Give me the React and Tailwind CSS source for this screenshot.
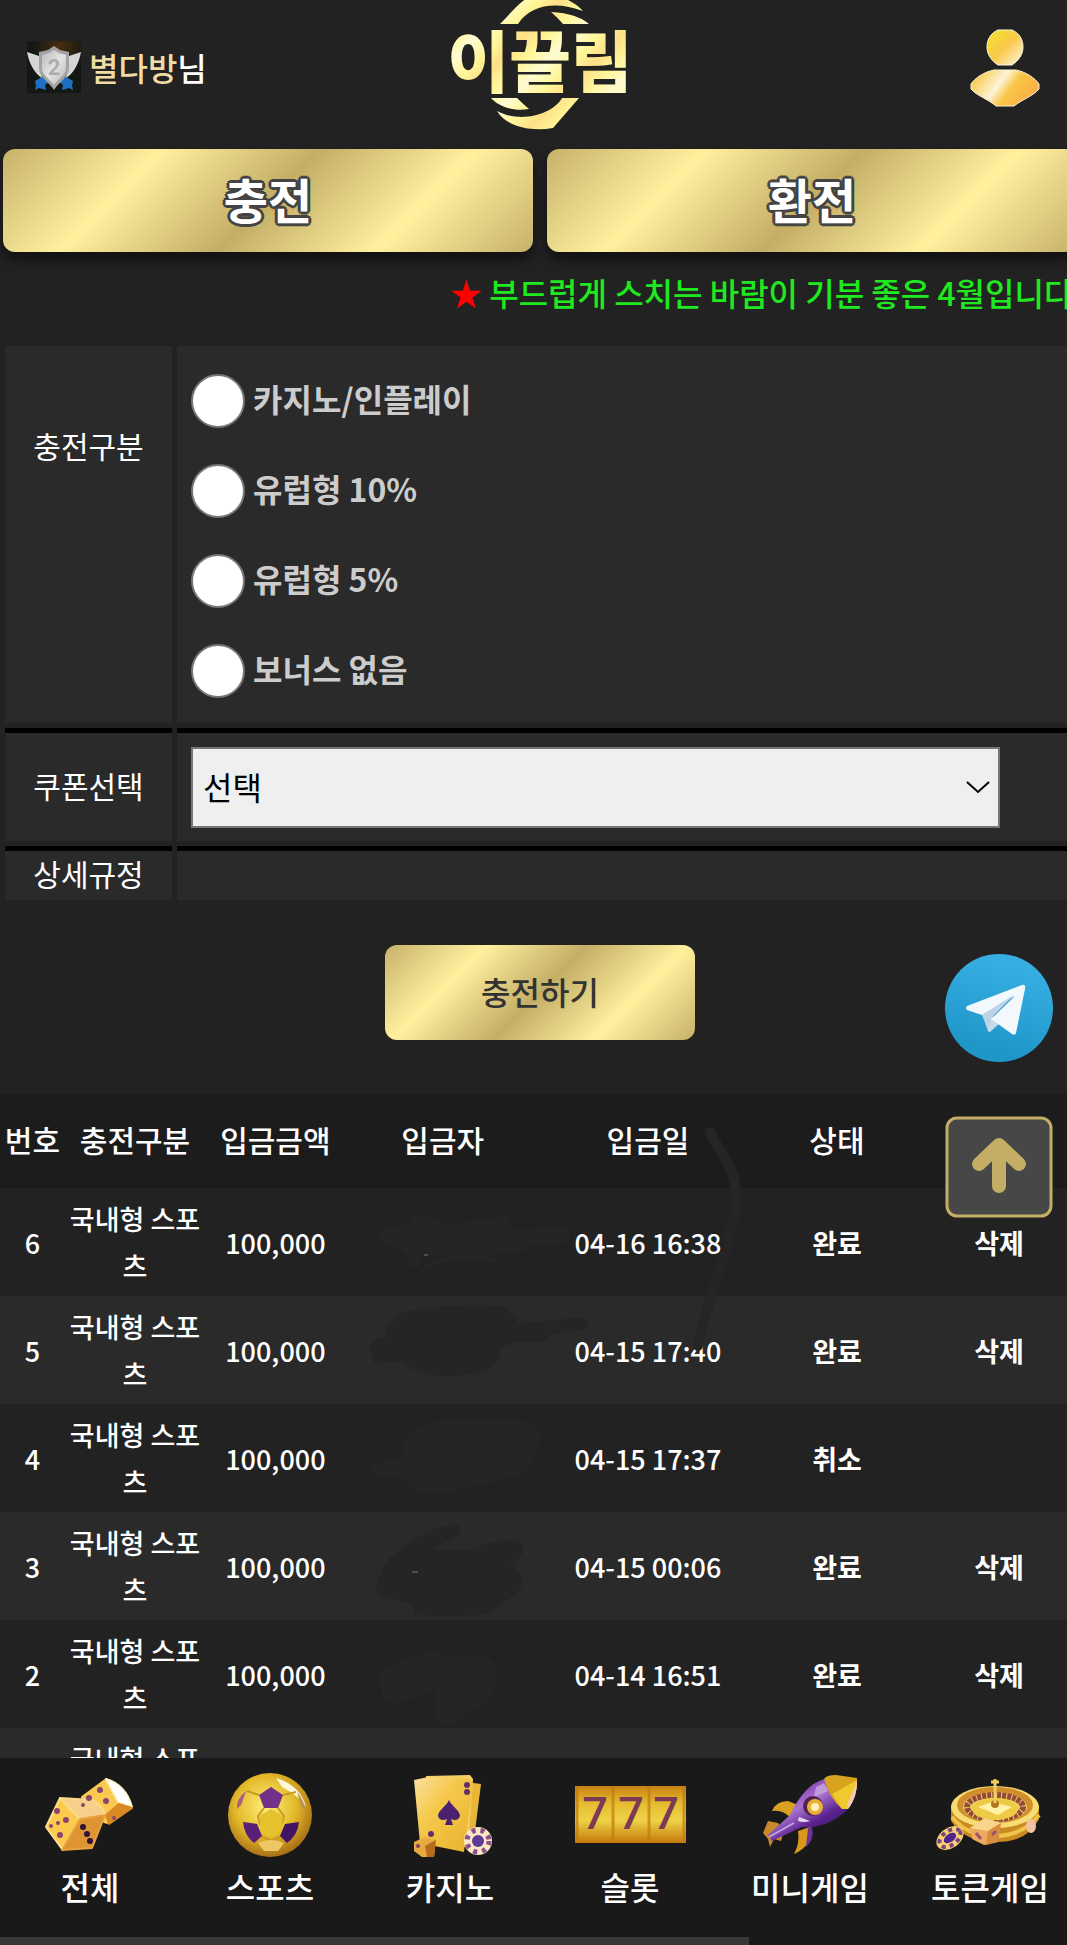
import React, { useState } from 'react';

const depositTypes = ['카지노/인플레이', '유럽형 10%', '유럽형 5%', '보너스 없음'];

const deposits = [
  { no: 6, type: '국내형 스포츠', amount: '100,000', date: '04-16 16:38', status: '완료', removable: true },
  { no: 5, type: '국내형 스포츠', amount: '100,000', date: '04-15 17:40', status: '완료', removable: true },
  { no: 4, type: '국내형 스포츠', amount: '100,000', date: '04-15 17:37', status: '취소', removable: false },
  { no: 3, type: '국내형 스포츠', amount: '100,000', date: '04-15 00:06', status: '완료', removable: true },
  { no: 2, type: '국내형 스포츠', amount: '100,000', date: '04-14 16:51', status: '완료', removable: true },
  { no: 1, type: '국내형 스포츠', amount: '', date: '', status: '', removable: false },
];

const goldButton =
  'bg-[linear-gradient(135deg,#c6b169_0%,#fff09e_25%,#c4ae66_50%,#fff09e_75%,#c6b169_100%)]';

const LevelBadge = () => (
  <svg width="54" height="52" viewBox="0 0 54 52" aria-hidden="true">
    <defs>
      <radialGradient id="badgeGlow" cx="0.6" cy="0.1" r="0.5">
        <stop offset="0" stopColor="#4a2c10" />
        <stop offset="1" stopColor="#141814" />
      </radialGradient>
      <linearGradient id="badgeSilver" x1="0" y1="0" x2="1" y2="1">
        <stop offset="0" stopColor="#b9b9b9" />
        <stop offset="0.5" stopColor="#e4e4e4" />
        <stop offset="1" stopColor="#b4b4b4" />
      </linearGradient>
    </defs>
    <rect width="54" height="52" fill="url(#badgeGlow)" />
    <path d="M8 40l7-4 8 4-5 4 1 5-7-2-4 2 1-5zM46 40l-7-4-8 4 5 4-1 5 7-2 4 2-1-5z" fill="#1f6fc4" />
    <path d="M0 11l12 4 3 22C7 32 2 22 0 11zM54 11l-12 4-3 22C47 32 52 22 54 11z" fill="#d3d6d3" />
    <path d="M27 5l6 4 9 2v16c0 9-9 13-15 22C21 40 12 36 12 27V11l9-2z" fill="#a3a3a3" />
    <path d="M27 9l5 3 7 2v13c0 7-7 10-12 17-5-7-12-10-12-17V14l7-2z" fill="url(#badgeSilver)" />
    <text x="27" y="34" textAnchor="middle" fontSize="22" fontWeight="700" fontFamily="Roboto, sans-serif" fill="#adadad">2</text>
  </svg>
);

const Logo = () => (
  <svg width="190" height="132" viewBox="0 0 190 132" role="img" aria-label="이끌림">
    <defs>
      <linearGradient id="logoGold" gradientUnits="userSpaceOnUse" x1="0" y1="20" x2="24" y2="44" spreadMethod="reflect">
        <stop offset="0" stopColor="#ffdf86" />
        <stop offset="0.5" stopColor="#fff79a" />
        <stop offset="1" stopColor="#fffbd2" />
      </linearGradient>
    </defs>
    <path d="M55 24C67 12 72 4 84 -3C108 -10 128 0 138 11C112 1 86 4 73 24z" fill="url(#logoGold)" />
    <path d="M106 12C124 13 136 17 144 24H118Q112 17 106 12z" fill="url(#logoGold)" />
    <path d="M46 98H72Q78 104 84 109C68 112 53 106 46 98z" fill="url(#logoGold)" />
    <path d="M52 111C76 124 108 114 117 98H134L108 128C84 132 61 126 52 111z" fill="url(#logoGold)" />
    <text
      x="95"
      y="87"
      textAnchor="middle"
      fontSize="67"
      fontWeight="900"
      fontFamily="'Noto Sans CJK KR', sans-serif"
      fill="url(#logoGold)"
    >
      이끌림
    </text>
  </svg>
);

const UserIcon = () => (
  <svg width="70" height="78" viewBox="0 0 70 78" aria-hidden="true">
    <defs>
      <linearGradient id="userHead" x1="0" y1="0" x2="1" y2="1">
        <stop offset="0" stopColor="#f2e52a" />
        <stop offset="0.5" stopColor="#f9c84a" />
        <stop offset="1" stopColor="#fffbe4" />
      </linearGradient>
      <linearGradient id="userBody" x1="0" y1="0.2" x2="1" y2="0.6">
        <stop offset="0" stopColor="#f5c63a" />
        <stop offset="0.42" stopColor="#fdf3d6" />
        <stop offset="0.62" stopColor="#fac545" />
        <stop offset="1" stopColor="#fbab48" />
      </linearGradient>
    </defs>
    <path d="M28 1h14c7 3 11 9 11 17s-5 14-11 18H28C22 32 17 26 17 18S21 4 28 1z" fill="url(#userHead)" stroke="#fff6dc" strokeWidth="1" />
    <path d="M24 41h22c10 2 19 8 23 14v5c-6 7-16 10-25 17H26C18 70 7 67 1 60v-5C5 49 14 43 24 41z" fill="url(#userBody)" stroke="#fff3d6" strokeWidth="1" />
  </svg>
);

const DiceIcon = () => (
  <svg width="112" height="84" viewBox="0 0 112 84" aria-hidden="true">
    <g strokeWidth="2" strokeLinejoin="round">
      <path d="M48 24L71 7L85 31L73 50L50 40z" fill="#fbc94f" stroke="#fbc94f" />
      <path d="M72 6Q92 12 98 34L85 30z" fill="#ffffff" stroke="#fff4d0" />
      <path d="M85 31L98 35L75 51L72 42z" fill="#d98a24" stroke="#d98a24" />
      <path d="M26 25L12 54L28 76L46 46z" fill="#fccb4e" stroke="#fde08a" />
      <path d="M26 25L58 27Q68 32 71 41L46 46z" fill="#f6cf8a" stroke="#fbd98e" />
      <path d="M46 46L71 42L58 75L28 77z" fill="#df9433" stroke="#e8a33e" />
    </g>
    <g fill="#8a4570">
      <circle cx="66" cy="17" r="3" />
      <circle cx="55" cy="25" r="3" />
      <circle cx="72" cy="28" r="3" />
      <circle cx="80" cy="45" r="2" />
      <circle cx="49" cy="32" r="2" />
      <circle cx="23" cy="38" r="3" />
      <circle cx="32" cy="47" r="3" />
      <circle cx="24" cy="50" r="2" />
      <circle cx="17" cy="53" r="2" />
      <circle cx="26" cy="62" r="3" />
    </g>
    <g fill="#2f1238">
      <circle cx="49" cy="54" r="3" />
      <circle cx="53" cy="61" r="3" />
      <circle cx="56" cy="68" r="3" />
    </g>
  </svg>
);

const BallIcon = () => (
  <svg width="112" height="84" viewBox="0 0 112 84" aria-hidden="true">
    <defs>
      <radialGradient id="ball" cx="0.45" cy="0.4" r="0.6">
        <stop offset="0" stopColor="#fff07a" />
        <stop offset="0.6" stopColor="#e3b92a" />
        <stop offset="1" stopColor="#a87016" />
      </radialGradient>
    </defs>
    <circle cx="56" cy="42" r="42" fill="url(#ball)" />
    <path d="M62 5Q86 12 92 34Q84 22 68 14z" fill="#fff8dc" />
    <path d="M50 35L44 43L46 52M64 35L70 43L67 52M47 63L57 68L67 63M45 22L33 18M69 22L82 19" stroke="#c99a22" strokeWidth="2" fill="none" />
    <path d="M57 36L69 43L67 58L57 65L47 58L45 43z" fill="#e6c22f" />
    <path d="M57 14L69 22L64 35H50L45 22z" fill="#74318a" />
    <path d="M29 49L43 51L48 63L40 70Q30 62 29 49z" fill="#5a2077" />
    <path d="M85 49L71 51L66 63L73 70Q84 62 85 49z" fill="#431463" />
    <path d="M32 18Q22 26 23 36L27 32Q30 24 32 18z" fill="#a75b86" />
    <path d="M83 19Q90 27 92 38L87 33z" fill="#b8924f" />
    <path d="M44 70Q56 64 70 70L64 78H50z" fill="#f0c766" />
  </svg>
);

const CardsIcon = () => (
  <svg width="112" height="84" viewBox="0 0 112 84" aria-hidden="true">
    <defs>
      <linearGradient id="card" x1="0" y1="0" x2="1" y2="1">
        <stop offset="0" stopColor="#fbe0a0" />
        <stop offset="0.4" stopColor="#f5c84a" />
        <stop offset="1" stopColor="#e8b22e" />
      </linearGradient>
    </defs>
    <path d="M72 9L87 11L80 66L64 76z" fill="#eab63a" />
    <path d="M32 3L76 2L79 6L74 74L34 70z" fill="#f6cf62" />
    <path d="M20 7L34 4L76 6L79 10L70 79L26 70z" fill="url(#card)" />
    <path d="M55 27C58 34 66 37 66 43Q64 49 57 46L59 52H51L53 46Q46 49 44 43C44 37 52 34 55 27z" fill="#4c2170" />
    <circle cx="73" cy="12" r="3" fill="#63306b" />
    <circle cx="73" cy="19" r="3" fill="#63306b" />
    <circle cx="37" cy="61" r="3" fill="#63306b" />
    <path d="M20 69L31 64L42 67L40 84H28L20 78z" fill="#e8a93f" />
    <path d="M31 73L42 67L40 84H33z" fill="#b76b1c" />
    <circle cx="24" cy="73" r="2" fill="#7c3c60" />
    <circle cx="84" cy="68" r="14" fill="#fbe9c4" />
    <circle cx="84" cy="68" r="11" fill="none" stroke="#8d4f8f" strokeWidth="5" strokeDasharray="4 5" />
    <circle cx="84" cy="68" r="6" fill="#5f3c94" />
  </svg>
);

const SlotsIcon = () => (
  <svg width="112" height="84" viewBox="0 0 112 84" aria-hidden="true">
    <defs>
      <linearGradient id="reel" x1="0" y1="0" x2="0" y2="1">
        <stop offset="0" stopColor="#c78212" />
        <stop offset="0.3" stopColor="#e5bb30" />
        <stop offset="0.6" stopColor="#eed347" />
        <stop offset="1" stopColor="#c6790c" />
      </linearGradient>
    </defs>
    <rect x="1" y="13" width="111" height="57" fill="url(#reel)" />
    <path d="M3 13V70M39 13V70M75 13V70M110 13V70" stroke="#c27a10" strokeWidth="3" opacity="0.7" />
    <g fontFamily="Roboto, sans-serif" fontSize="45" fontWeight="500" fill="#7c3a55" textAnchor="middle">
      <text x="21" y="56">7</text>
      <text x="57" y="56">7</text>
      <text x="92" y="56">7</text>
    </g>
  </svg>
);

const RocketIcon = () => (
  <svg width="112" height="84" viewBox="0 0 112 84" aria-hidden="true">
    <defs>
      <linearGradient id="hull" x1="0.2" y1="0.1" x2="0.8" y2="0.9">
        <stop offset="0.2" stopColor="#8d4bb8" />
        <stop offset="0.4" stopColor="#a873d0" />
        <stop offset="0.7" stopColor="#5b2490" />
        <stop offset="1" stopColor="#3b1366" />
      </linearGradient>
    </defs>
    <path d="M18 38Q22 28 34 28L44 32L37 45Q28 36 18 38z" fill="#d9a021" />
    <path d="M14 48L24 50L30 58L27 68L20 66L16 74L14 66L9 60z" fill="#c98a2c" />
    <path d="M44 58L56 54Q60 72 40 81Q46 70 44 58z" fill="#d99a1c" />
    <path d="M54 55L58 54Q61 66 52 74z" fill="#6c3299" />
    <path d="M14 62L36 42Q50 12 70 6L94 36Q74 56 48 54L18 68z" fill="url(#hull)" />
    <path d="M70 6Q72 2 82 2L103 5Q104 22 94 36L88 36Q76 26 70 6z" fill="#d8a31e" />
    <path d="M78 21L103 7Q104 22 94 36L88 36z" fill="#efc92d" />
    <path d="M103 8Q103 24 95 35L93 32z" fill="#f3c7b5" />
    <path d="M62 14L70 10L74 18L60 24z" fill="#cfb2e2" opacity="0.7" />
    <circle cx="59" cy="33" r="10" fill="#57214f" />
    <circle cx="61" cy="34" r="8" fill="#e8b23a" />
    <circle cx="61" cy="34" r="4" fill="#fff2b8" />
    <path d="M45 44L56 48Q50 50 44 48z" fill="#e6d4f1" />
    <path d="M15 64L40 50" stroke="#c5a3e3" strokeWidth="2" />
  </svg>
);

const RouletteIcon = () => (
  <svg width="112" height="84" viewBox="0 0 112 84" aria-hidden="true">
    <path d="M17 32V48Q30 69 62 69T105 46V32z" fill="#c98a1e" />
    <path d="M18 44Q34 64 62 63T105 42" stroke="#f0c34a" strokeWidth="4" fill="none" />
    <ellipse cx="61" cy="34" rx="44" ry="21" fill="#f6dc72" />
    <ellipse cx="61" cy="32" rx="38" ry="18" fill="#d08e2c" />
    <ellipse cx="61" cy="34" rx="32" ry="15" fill="#f1d05a" />
    <ellipse cx="61" cy="34" rx="28" ry="12" fill="none" stroke="#934a3c" strokeWidth="6" strokeDasharray="4 1" />
    <ellipse cx="61" cy="36" rx="23" ry="11" fill="#edcb45" />
    <path d="M44 34L58 29L78 34L64 42z" fill="#fff3a8" />
    <circle cx="61" cy="31" r="4" fill="#b5781c" />
    <path d="M61 6V30M57 9H65" stroke="#f0cf60" strokeWidth="3" />
    <path d="M36 55L51 45L67 50L64 69L50 72L38 66z" fill="#ecaa60" />
    <path d="M36 55L51 45L67 50L54 58z" fill="#f9d58b" />
    <path d="M54 58L67 50L64 69L52 72z" fill="#d98c40" />
    <path d="M42 60L47 66M58 62L62 58" stroke="#9b5470" strokeWidth="3" />
    <ellipse cx="97" cy="53" rx="5" ry="7" fill="#f2c2a2" />
    <g transform="rotate(-35 16 65)">
      <ellipse cx="16" cy="65" rx="15" ry="10" fill="#f7d070" />
      <ellipse cx="16" cy="65" rx="12" ry="7" fill="none" stroke="#7d4180" strokeWidth="4" strokeDasharray="4 4" />
      <ellipse cx="16" cy="65" rx="7" ry="4" fill="#4f2390" />
    </g>
  </svg>
);

const TelegramIcon = () => (
  <svg width="108" height="108" viewBox="0 0 108 108" aria-hidden="true">
    <defs>
      <linearGradient id="tg" x1="0.6" y1="0.1" x2="0.4" y2="0.9">
        <stop offset="0" stopColor="#37aee2" />
        <stop offset="1" stopColor="#1e96c8" />
      </linearGradient>
    </defs>
    <circle cx="54" cy="54" r="54" fill="url(#tg)" />
    <path d="M37 60L43 77Q44 79 46 77L54 70L47 62z" fill="#c8daea" />
    <path d="M22 52L77 31Q81 30 80 35L71 79Q70 82 67 80L46 65L70 42L37 61L22 56Q20 54 22 52z" fill="#f3f8fd" />
    <path d="M37 61L70 40L46 64L44 76z" fill="#bfd3e6" />
  </svg>
);

const ArrowUpIcon = () => (
  <svg width="108" height="102" viewBox="0 0 108 102" aria-hidden="true">
    <rect x="2" y="2" width="104" height="98" rx="10" fill="#474747" stroke="#c4ae66" strokeWidth="3" />
    <path d="M54 70V30M34 48L54 29L74 48" stroke="#c4ae66" strokeWidth="14" strokeLinecap="round" strokeLinejoin="round" fill="none" />
  </svg>
);

// Strokes that hide the depositor names in the list
const NameMask = () => (
  <svg className="pointer-events-none absolute top-0 left-0" width="760" height="664" viewBox="0 0 760 664" aria-hidden="true">
    <g fill="#252525">
      <path d="M382 134Q388 131 410 131Q406 120 416 119L450 130L506 122Q514 126 510 136L565 134Q573 140 568 148L532 152Q525 160 490 161L420 162L418 172Q410 178 406 160Q398 152 386 152Q376 146 382 134z" />
      <path d="M372 250Q374 243 386 244Q386 216 430 214Q490 208 505 214Q516 220 518 230L584 223Q592 228 586 235L548 241Q546 250 535 249L516 247Q508 253 499 253Q504 270 480 278Q430 290 405 270Q398 266 376 270Q368 262 372 250z" />
      <path d="M374 370L403 363Q402 335 430 329Q480 320 520 327Q543 330 539 350Q538 372 515 383L465 394Q420 410 403 385L378 383Q368 378 374 370z" />
      <path d="M376 492Q384 470 390 464Q430 430 458 431Q465 440 455 443L432 455L470 456Q500 444 520 446Q530 460 510 471Q528 482 520 495Q500 515 480 521Q430 524 415 520L412 511Q395 504 378 500z" />
      <path d="M378 578Q420 556 440 558L445 563Q490 554 497 575Q498 605 478 615Q465 620 455 629Q435 635 434 610L436 597L392 610Q380 608 382 596Q374 588 378 578z" />
    </g>
    <g fill="none" stroke="#252525" strokeLinecap="round">
      <path d="M420 179Q432 164 460 164T500 167" strokeWidth="4" />
      <path d="M710 38C718 56 738 76 736 104C732 156 706 204 698 252" strokeWidth="10" />
    </g>
    <path d="M424 161H428M412 478H418" stroke="#777" strokeWidth="1" />
  </svg>
);

const menu = [
  { label: '전체', Icon: DiceIcon },
  { label: '스포츠', Icon: BallIcon },
  { label: '카지노', Icon: CardsIcon },
  { label: '슬롯', Icon: SlotsIcon },
  { label: '미니게임', Icon: RocketIcon },
  { label: '토큰게임', Icon: RouletteIcon },
];

const Header = () => (
  <header className="grid h-[149px] grid-cols-3">
    <div className="flex h-[134px] items-center pl-[27px] text-[32px] font-medium">
      <LevelBadge />
      <span className="ml-2 text-[#f0dca4]">별다방</span>
      <span>님</span>
    </div>
    <a href="#home" className="justify-self-center">
      <Logo />
    </a>
    <button type="button" aria-label="내 정보" className="mt-[29px] mr-10 self-start justify-self-end">
      <UserIcon />
    </button>
  </header>
);

const DepositForm = () => {
  const [type, setType] = useState('');
  const labelCell = 'bg-[#2a2a2a] text-center text-[30px] leading-[44px]';

  return (
    <form className="pt-[10px]" onSubmit={(e) => e.preventDefault()}>
      <div className="grid grid-cols-[167px_1fr] gap-[5px] pl-[5px]">
        <div id="type-label" className={`${labelCell} pt-[77px]`}>충전구분</div>
        <div role="radiogroup" aria-labelledby="type-label" className="bg-[#2a2a2a] pt-[10px] pb-[7px] pl-[14px]">
          {depositTypes.map((item) => (
            <label key={item} className="flex h-[90px] w-fit items-center gap-2 text-[32px] font-bold text-[#ccc]">
              <input
                type="radio"
                name="type"
                value={item}
                checked={type === item}
                onChange={() => setType(item)}
                className="size-[54px] appearance-none rounded-full border-2 border-[#767676] bg-white checked:border-[16px]"
              />
              <span className="pb-1.5">{item}</span>
            </label>
          ))}
        </div>

        <label htmlFor="coupon" className={`${labelCell} flex items-center justify-center border-t-[5px] border-black pb-1`}>
          쿠폰선택
        </label>
        <div className="border-t-[5px] border-black bg-[#2a2a2a] pt-[14px] pb-[13px] pl-[14px]">
          <div className="relative w-[91%]">
            <select
              id="coupon"
              className="h-[81px] w-full appearance-none border-2 border-[#767676] bg-[#efefef] px-2.5 pb-1 text-[32px] text-black"
            >
              <option>선택</option>
            </select>
            <svg className="pointer-events-none absolute top-[33px] right-2.5" width="24" height="14" viewBox="0 0 24 14" aria-hidden="true">
              <path d="M1 2L12 12L23 2" stroke="#000" strokeWidth="2" fill="none" />
            </svg>
          </div>
        </div>

        <div className={`${labelCell} h-[54px] border-t-[5px] border-black`}>상세규정</div>
        <div className="border-t-[5px] border-black bg-[#2a2a2a]" />
      </div>

      <div className="flex justify-center pt-[45px] pb-[54px]">
        <button type="submit" className={`${goldButton} h-[95px] w-[310px] rounded-xl pb-1 text-[32px] font-medium text-[#333]`}>
          충전하기
        </button>
      </div>
    </form>
  );
};

const DepositTable = () => (
  <div className="relative">
    <table className="w-full table-fixed text-center text-[27px] leading-[47px] font-medium">
      <colgroup>
        <col className="w-[6%]" />
        <col className="w-[13%]" />
        <col className="w-[13%]" />
        <col className="w-[18%]" />
        <col className="w-[20%]" />
        <col className="w-[15%]" />
        <col className="w-[15%]" />
      </colgroup>
      <thead>
        <tr className="h-[94px] bg-[#1c1c1c] text-[30px] whitespace-nowrap">
          <th className="pb-1 font-medium">번호</th>
          <th className="pb-1 font-medium">충전구분</th>
          <th className="pb-1 font-medium">입금금액</th>
          <th className="pb-1 font-medium">입금자</th>
          <th className="pb-1 font-medium">입금일</th>
          <th className="pb-1 font-medium">상태</th>
          <th />
        </tr>
      </thead>
      <tbody>
        {deposits.map((row) => (
          <tr key={row.no} className="h-[108px] odd:bg-[#222] even:bg-[#2a2a2a]">
            <td>{row.amount && row.no}</td>
            <td className="px-1 py-[7px] break-all">{row.type}</td>
            <td>{row.amount}</td>
            <td />
            <td>{row.date}</td>
            <td className="font-bold">{row.status}</td>
            <td>
              {row.removable && (
                <button type="button" className="font-bold">
                  삭제
                </button>
              )}
            </td>
          </tr>
        ))}
      </tbody>
    </table>
    <NameMask />
  </div>
);

const App = () => {
  const topButton =
    'h-[103px] flex-1 rounded-xl pb-1.5 text-[48px] font-bold text-white shadow-[0_8px_12px_rgba(0,0,0,0.5)] [text-shadow:-2px_-2px_0_#444,2px_-2px_0_#444,-2px_2px_0_#444,2px_2px_0_#444,0_3px_0_#444,0_-3px_0_#444,3px_0_0_#444,-3px_0_0_#444]';

  return (
    <div className="flex h-screen flex-col overflow-hidden bg-[#222] font-['Noto_Sans_CJK_KR','Noto_Sans',sans-serif] text-white">
      {/* the content is a little wider than the screen */}
      <main className="min-h-0 w-[calc(100%+13px)] flex-1 overflow-hidden">
        <Header />
        <div className="flex gap-[14px] px-[3px]">
          <button type="button" className={`${goldButton} ${topButton}`}>충전</button>
          <button type="button" className={`${goldButton} ${topButton}`}>환전</button>
        </div>
        <p className="pb-1 pl-[450px] text-[32px] leading-[80px] font-medium whitespace-nowrap text-[#1fea1f]">
          <span className="text-[#f00]">★</span> 부드럽게 스치는 바람이 기분 좋은 4월입니다
        </p>
        <DepositForm />
        <DepositTable />
      </main>

      <nav className="w-[calc(100%+13px)] bg-[#191919]">
        <ul className="grid h-[179px] grid-cols-6 pt-[15px]">
          {menu.map(({ label, Icon }) => (
            <li key={label}>
              <a href="#game" className="flex flex-col items-center gap-1.5 text-[32px] leading-[46px] font-medium">
                <Icon />
                {label}
              </a>
            </li>
          ))}
        </ul>
        <div className="h-2 w-[749px] bg-[#383838]" />
      </nav>

      <a href="#telegram" aria-label="텔레그램" className="fixed top-[954px] right-[14px]">
        <TelegramIcon />
      </a>
      <button type="button" aria-label="맨 위로" className="fixed top-[1116px] right-[14px]">
        <ArrowUpIcon />
      </button>
    </div>
  );
};

export default App;
